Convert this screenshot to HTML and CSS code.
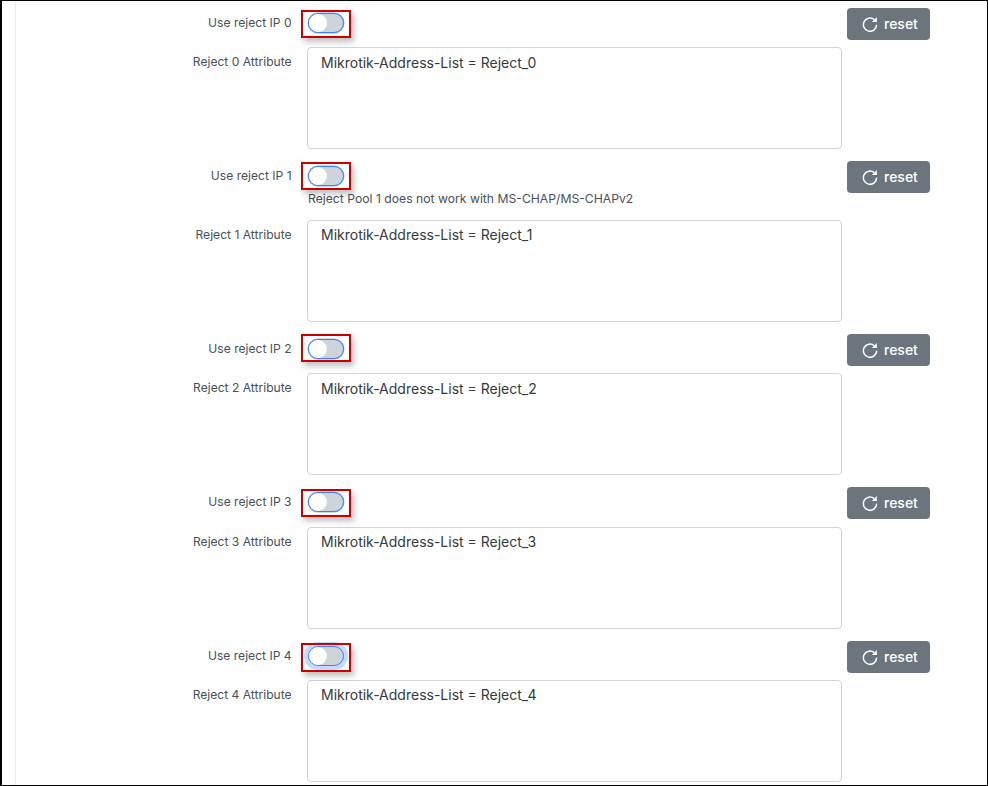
FILE: index.html
```html
<!DOCTYPE html>
<html lang="en">
<head>
<meta charset="utf-8">
<title>Reject IP settings</title>
<link rel="stylesheet" href="styles.css">
</head>
<body>
<div class="frame">
  <main class="panel">
    <section class="group">
      <div class="row row-switch">
        <label class="label">Use reject IP 0</label>
        <div class="control"><span class="switch"><span class="knob"></span><span class="mark"></span></span></div>
        <button class="reset"><svg class="icon" viewBox="0 0 16 16"><path d="M14.6 8.7a6.6 6.6 0 1 1-2.3-5"/><path class="fill" d="M14.8 1v4.9H9.9z"/></svg>reset</button>
      </div>
      <div class="row">
        <label class="label">Reject 0 Attribute</label>
        <div class="control"><textarea class="area" readonly>Mikrotik-Address-List = Reject_0</textarea></div>
      </div>
    </section>
    <section class="group">
      <div class="row row-switch">
        <label class="label">Use reject IP 1</label>
        <div class="control"><span class="switch"><span class="knob"></span><span class="mark mark-high"></span></span>
          <p class="help">Reject Pool 1 does not work with MS-CHAP/MS-CHAPv2</p></div>
        <button class="reset"><svg class="icon" viewBox="0 0 16 16"><path d="M14.6 8.7a6.6 6.6 0 1 1-2.3-5"/><path class="fill" d="M14.8 1v4.9H9.9z"/></svg>reset</button>
      </div>
      <div class="row">
        <label class="label">Reject 1 Attribute</label>
        <div class="control"><textarea class="area" readonly>Mikrotik-Address-List = Reject_1</textarea></div>
      </div>
    </section>
    <section class="group">
      <div class="row row-switch">
        <label class="label">Use reject IP 2</label>
        <div class="control"><span class="switch"><span class="knob"></span><span class="mark mark-higher"></span></span></div>
        <button class="reset"><svg class="icon" viewBox="0 0 16 16"><path d="M14.6 8.7a6.6 6.6 0 1 1-2.3-5"/><path class="fill" d="M14.8 1v4.9H9.9z"/></svg>reset</button>
      </div>
      <div class="row">
        <label class="label">Reject 2 Attribute</label>
        <div class="control"><textarea class="area" readonly>Mikrotik-Address-List = Reject_2</textarea></div>
      </div>
    </section>
    <section class="group">
      <div class="row row-switch">
        <label class="label">Use reject IP 3</label>
        <div class="control"><span class="switch"><span class="knob"></span><span class="mark"></span></span></div>
        <button class="reset"><svg class="icon" viewBox="0 0 16 16"><path d="M14.6 8.7a6.6 6.6 0 1 1-2.3-5"/><path class="fill" d="M14.8 1v4.9H9.9z"/></svg>reset</button>
      </div>
      <div class="row">
        <label class="label">Reject 3 Attribute</label>
        <div class="control"><textarea class="area" readonly>Mikrotik-Address-List = Reject_3</textarea></div>
      </div>
    </section>
    <section class="group">
      <div class="row row-switch">
        <label class="label">Use reject IP 4</label>
        <div class="control"><span class="switch focused"><span class="knob"></span><span class="mark mark-tall"></span></span></div>
        <button class="reset"><svg class="icon" viewBox="0 0 16 16"><path d="M14.6 8.7a6.6 6.6 0 1 1-2.3-5"/><path class="fill" d="M14.8 1v4.9H9.9z"/></svg>reset</button>
      </div>
      <div class="row">
        <label class="label">Reject 4 Attribute</label>
        <div class="control"><textarea class="area" readonly>Mikrotik-Address-List = Reject_4</textarea></div>
      </div>
    </section>
  </main>
</div>
</body>
</html>
```

FILE: styles.css
```css
* { box-sizing: border-box; }
html, body { margin: 0; height: 100%; background: #fff; overflow: hidden; }
body { font-family: Inter, "Liberation Sans", sans-serif; color: #343a40; }
.frame { height: 786px; border: 1px solid #000; border-left-width: 2px; padding-left: 13px; overflow: hidden; }
.panel { height: 100%; border-left: 1px solid #e9ecef; padding-top: 7px; display: flex; flex-direction: column; gap: 12.1px; }
.row { display: grid; grid-template-columns: 275.6px 535px 83px; column-gap: 15.4px; align-items: start; }
.row-switch { grid-template-columns: 275.6px 545.4px 83px; column-gap: 5px; margin-bottom: 7.2px; }
.label { text-align: right; font-size: 12.1px; line-height: 16px; padding-top: 7px; color: #495057; }
.row-switch .control { padding-left: 11.4px; }
.switch { display: block; width: 36px; height: 20px; margin-top: 5px; border: 1px solid #3f80ee; border-radius: 10px; background: #ced4da; box-shadow: 0 0 0 .5px rgba(63,128,238,.6); position: relative; }
.focused { box-shadow: 0 0 0 4px rgba(13,110,253,.25); }
.knob { position: absolute; left: 0; top: 0; width: 18px; height: 18px; border-radius: 50%; background: #fff; }
.mark { position: absolute; left: -8px; top: -4px; width: 50px; height: 28px; border: 2px solid #cc0000; box-shadow: 3px 4px 6px rgba(0,0,0,.25); }
.mark-high { top: -5px; }
.mark-higher { top: -6px; }
.mark-tall { height: 29px; }
.help { margin: 5px 0 0; padding-bottom: 5.5px; font-size: 12.2px; line-height: 16px; color: #495057; }
.area { display: block; width: 535px; height: 102px; padding: 4.5px 13px; border: 1px solid #ced4da; border-radius: 4px; font: 14px/20px Inter, "Liberation Sans", sans-serif; color: #343a40; background: #fff; resize: none; outline: none; }
.reset { grid-column: 3; grid-row: 1; display: flex; align-items: center; gap: 6px; height: 32px; width: 83px; border: 0; border-radius: 4px; background: #6c757d; color: #fff; font: 500 14px/20px Inter, "Liberation Sans", sans-serif; padding: 0 0 0 15px; }
.icon { width: 16px; height: 16px; fill: none; stroke: #fff; stroke-width: 1.5; }
.icon .fill { fill: #fff; stroke: none; }
```
